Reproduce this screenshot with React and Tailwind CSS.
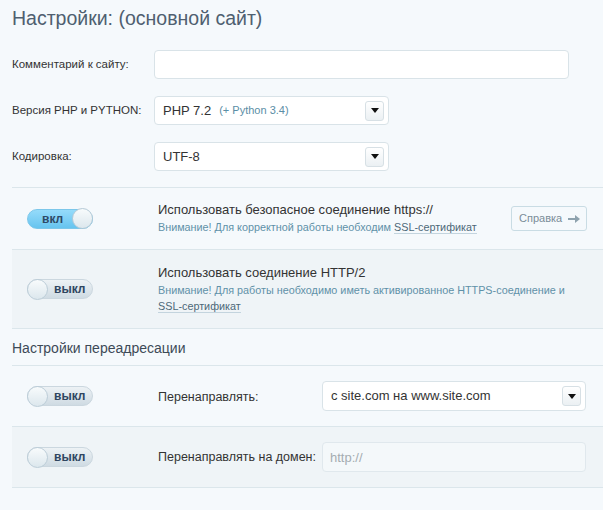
import { useState } from "react";

const SelectArrow = () => (
  <span className="absolute right-[4px] top-1/2 -translate-y-1/2 flex h-[20px] w-[19px] items-center justify-center rounded-[3px] border border-[#d7e0e5] bg-gradient-to-b from-[#ffffff] to-[#ebf0f3]">
    <svg width="8" height="5" viewBox="0 0 8 5">
      <path d="M0 0 H8 L4 5 Z" fill="#111" />
    </svg>
  </span>
);

const Toggle = ({ on }) => (
  <div
    className={
      on
        ? "relative flex h-[20px] w-[66px] items-center rounded-full border border-[#7cc7ea] bg-gradient-to-b from-[#95dbfa] to-[#66c4ef]"
        : "relative flex h-[20px] w-[66px] items-center rounded-full border border-[#cbd7df] bg-gradient-to-b from-[#edf2f5] to-[#cfdbe3]"
    }
  >
    <span
      className={
        on
          ? "absolute left-[14px] text-[12px] font-bold text-[#2f4a66]"
          : "absolute left-[26px] text-[12px] font-bold text-[#2f4560]"
      }
    >
      {on ? "вкл" : "выкл"}
    </span>
    <span
      className={
        on
          ? "absolute right-[-1px] h-[21px] w-[21px] rounded-full border border-[#b6cad6] bg-gradient-to-b from-[#f8fbfc] to-[#dce7ed]"
          : "absolute left-[-1px] h-[21px] w-[21px] rounded-full border border-[#bccdd8] bg-gradient-to-b from-[#f8fbfc] to-[#dce7ed]"
      }
    />
  </div>
);

const Ssl = () => (
  <span className="border-b border-[#c3d4de] text-[#4d6878]">SSL-сертификат</span>
);

export default function App() {
  const [comment, setComment] = useState("");

  return (
    <div className="min-h-[510px] bg-[#f5f9fc] font-['Liberation_Sans',Arial,sans-serif] text-[#333]">
      <h1 className="px-3 pt-[7px] text-[19.5px] leading-[22px] text-[#4f5f70]">
        Настройки: (основной сайт)
      </h1>

      {/* ===== основные поля ===== */}
      <div className="mt-[21px] flex flex-col gap-[17px] px-3">
        <div className="flex items-center">
          <label className="w-[142px] text-[11.5px]">Комментарий к сайту:</label>
          <input
            value={comment}
            onChange={(e) => setComment(e.target.value)}
            className="h-[29px] w-[415px] rounded-[4px] border border-[#d9e3e8] bg-white px-2 text-[13px] outline-none"
          />
        </div>
        <div className="flex items-center">
          <label className="w-[142px] text-[11.5px]">Версия PHP и PYTHON:</label>
          <div className="relative flex h-[29px] w-[235px] items-center rounded-[4px] border border-[#d9e3e8] bg-white px-[8px] text-[13px]">
            PHP 7.2
            <span className="ml-[8px] text-[11px] text-[#5b8ea6]">(+ Python 3.4)</span>
            <SelectArrow />
          </div>
        </div>
        <div className="flex items-center">
          <label className="w-[142px] text-[11.5px]">Кодировка:</label>
          <div className="relative flex h-[29px] w-[235px] items-center rounded-[4px] border border-[#d9e3e8] bg-white px-[8px] text-[13px]">
            UTF-8
            <SelectArrow />
          </div>
        </div>
      </div>

      {/* ===== переключатели ===== */}
      <div className="ml-3 mt-[16px] border-t border-[#dbe6eb]">
        <div className="flex h-[62px] items-center border-b border-[#dbe6eb] pl-[15px] pr-[16px]">
          <div className="w-[131px]">
            <Toggle on />
          </div>
          <div className="flex-1">
            <div className="text-[13px] leading-[16px]">Использовать безопасное соединение https://</div>
            <div className="mt-[1px] text-[10.8px] leading-[16px] text-[#5f91a8]">
              Внимание! Для корректной работы необходим <Ssl />
            </div>
          </div>
          <button className="flex h-[25px] w-[76px] items-center justify-between rounded-[3px] border border-[#c9dce4] pl-[7px] pr-[6px] text-[11px] text-[#7a8c98]">
            Справка
            <svg width="12" height="8" viewBox="0 0 12 8">
              <path d="M0 3 H7 V0 L12 4 L7 8 V5 H0 Z" fill="#8ea2ae" />
            </svg>
          </button>
        </div>

        <div className="flex h-[79px] items-center border-b border-[#dbe6eb] bg-[#eff4f7] pl-[15px] pr-[16px]">
          <div className="w-[131px]">
            <Toggle />
          </div>
          <div className="flex-1 pt-[1px]">
            <div className="text-[13px] leading-[16px]">Использовать соединение HTTP/2</div>
            <div className="mt-[1px] text-[10.8px] leading-[16px] text-[#5f91a8]">
              Внимание! Для работы необходимо иметь активированное HTTPS-соединение и
              <br />
              <Ssl />
            </div>
          </div>
        </div>
      </div>

      <h2 className="px-3 pt-[10px] pb-[8px] text-[14px] leading-[18px] text-[#3d4a57]">
        Настройки переадресации
      </h2>

      <div className="ml-3 border-t border-[#dbe6eb]">
        <div className="flex h-[61px] items-center border-b border-[#dbe6eb] pl-[15px] pr-[17px]">
          <div className="w-[131px]">
            <Toggle />
          </div>
          <div className="w-[164px] pt-[2px] text-[12.5px]">Перенаправлять:</div>
          <div className="relative flex h-[30px] flex-1 items-center rounded-[4px] border border-[#d9e3e8] bg-white px-[8px] text-[13px]">
            с site.com на www.site.com
            <SelectArrow />
          </div>
        </div>
        <div className="flex h-[61px] items-center border-b border-[#dbe6eb] bg-[#eff4f7] pl-[15px] pr-[17px]">
          <div className="w-[131px]">
            <Toggle />
          </div>
          <div className="w-[164px] whitespace-nowrap text-[12.5px]">Перенаправлять на домен:</div>
          <input
            placeholder="http://"
            className="h-[30px] min-w-0 flex-1 rounded-[4px] border border-[#e0e8ed] bg-[#f4f8fa] px-[7px] text-[13px] outline-none placeholder:text-[#a4acb1]"
          />
        </div>
      </div>
    </div>
  );
}
